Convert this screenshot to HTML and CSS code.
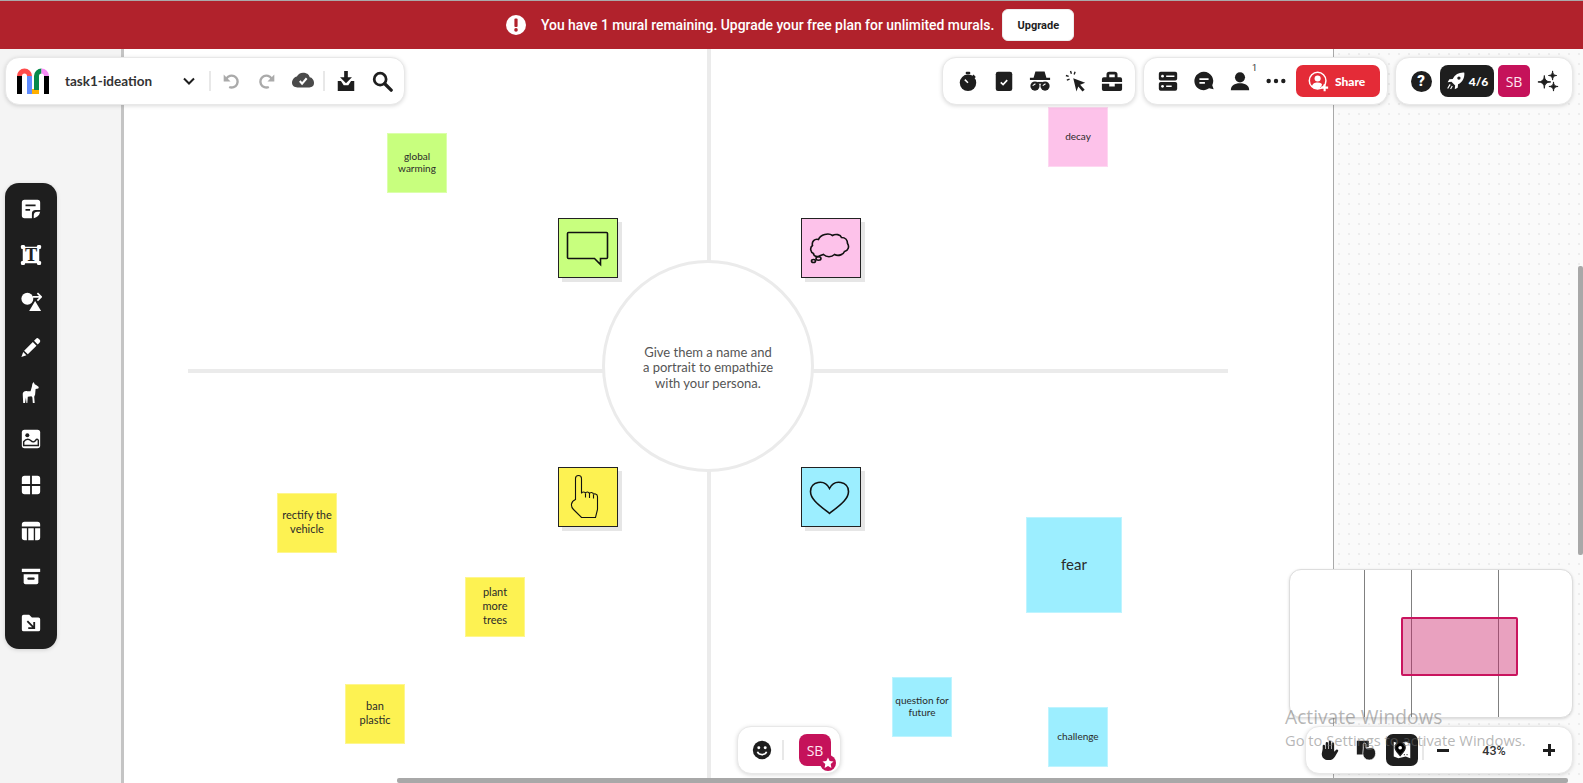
FILE: index.html
```html
<!DOCTYPE html>
<html lang="en">
<head>
    <meta charset="UTF-8">
    <meta name="viewport" content="width=device-width, initial-scale=1.0">
    <title>task1-ideation</title>
    <link rel="stylesheet" href="styles.css">
</head>
<body>
    <div class="banner">
        <svg class="banner-icon" viewBox="0 0 20 20"><circle cx="10" cy="10" r="10" fill="#fff"/><rect x="8.4" y="3.6" width="3.2" height="8.4" rx="1" fill="#b1222c"/><circle cx="10" cy="14.9" r="1.8" fill="#b1222c"/></svg>
        <span class="banner-text">You have 1 mural remaining. Upgrade your free plan for unlimited murals.</span>
        <button class="upgrade">Upgrade</button>
    </div>

    <div class="board">
        <div class="gutter"></div>
        <div class="sheet"></div>
        <div class="outside"></div>

        <!-- the empathy map itself -->
        <div class="line line-v"></div>
        <div class="line line-h"></div>
        <div class="hub"><p>Give them a name and<br>a portrait to empathize<br>with your persona.</p></div>

        <div class="tile tile-says green">
            <svg viewBox="1.500 1.500 57 57"><path d="M11 15h38a1 1 0 0 1 1 1v24a1 1 0 0 1-1 1h-6v6l-6-6H11a1 1 0 0 1-1-1V16a1 1 0 0 1 1-1z"/></svg>
        </div>
        <div class="tile tile-thinks pink">
            <svg viewBox="1.500 1.500 57 57"><path d="M20 38c-3 2-7 1-7-2-3-1-4-6-1-8-1-4 2-7 6-6 2-5 10-7 14-4 3-2 8-1 9 2 4 0 6 3 6 6 2 3 1 7-3 8-1 3-6 5-10 3-3 3-8 3-11 0z"/><ellipse cx="18" cy="41" rx="2.500" ry="1.700"/><ellipse cx="13" cy="43.500" rx="2" ry="1.500"/></svg>
        </div>
        <div class="tile tile-does yellow">
            <svg viewBox="1.500 1.500 57 57"><path class="thin" d="M18 33V12c0-4 6-4 6 0v15c0-2 4-2 4 0 0-2 4-2 4 .5 0-2 4-2 4 .5 0-1 4-1 4 2v13l-2 8H24l-8-8c-3-3-3-8 2-10z"/><path class="thin" d="M28 27v4M32 27.500v4M36 28v4"/></svg>
        </div>
        <div class="tile tile-feels blue">
            <svg viewBox="1.500 1.500 57 57"><path d="M29 47C19 39 10 33 10 25c0-10 14-13 19-3 5-10 19-7 19 3 0 8-9 14-19 22z"/></svg>
        </div>

        <div class="note note-global green">global warming</div>
        <div class="note note-decay pink">decay</div>
        <div class="note note-rectify yellow">rectify the vehicle</div>
        <div class="note note-plant yellow">plant<br>more<br>trees</div>
        <div class="note note-ban yellow">ban<br>plastic</div>
        <div class="note note-question blue">question for future</div>
        <div class="note note-challenge blue">challenge</div>
        <div class="note note-fear blue">fear</div>

        <!-- top toolbars -->
        <div class="bar bar-title">
            <svg class="logo" viewBox="0 0 32 26">
                <rect x="0" y="8" width="5" height="18"/>
                <path d="M2.500 8a5 5 0 0 1 10 0" fill="none" stroke="#ff4b4b" stroke-width="5"/>
                <rect x="10" y="8" width="5" height="18" fill="#5f8cff"/>
                <rect x="15" y="21" width="7" height="5" fill="#ffb000"/>
                <rect x="17" y="8" width="5" height="14" fill="#058a4b"/>
                <path d="M19.500 8a5 5 0 0 1 5-5" fill="none" stroke="#058a4b" stroke-width="5"/>
                <path d="M24.500 3a5 5 0 0 1 5 5" fill="none" stroke="#f78bf5" stroke-width="5"/>
                <rect x="27" y="8" width="5" height="18"/>
            </svg>
            <span class="mural-name">task1-ideation</span>
            <svg class="chevron" viewBox="0 0 20 20"><path d="M5 7.500l5 5 5-5" fill="none" stroke="#1e1e1e" stroke-width="2"/></svg>
            <i class="sep"></i>
            <span class="tool tool-first"><svg class="ico" viewBox="0 0 24 24"><path d="M7 9.500a6.500 6.500 0 1 1 3 9" fill="none" stroke="#aaa" stroke-width="2.600"/><path d="M4 5v7.500h7.500z" fill="#aaa"/></svg></span>
            <span class="tool"><svg class="ico" viewBox="0 0 24 24"><path d="M17 9.500a6.500 6.500 0 1 0-3 9" fill="none" stroke="#aaa" stroke-width="2.600"/><path d="M20 5v7.500h-7.500z" fill="#aaa"/></svg></span>
            <span class="tool"><svg class="ico" viewBox="0 0 24 24"><path fill="#4a4a4a" d="M19.350 8.040C18.670 4.590 15.640 3 12 3 9.110 3 6.600 4.640 5.350 7.040 2.340 7.360 0 10.910 0 14c0 3.310 2.690 5 6 5h13c2.760 0 5-1.240 5-5 0-2.640-2.050-5.780-4.650-5.960z"/><path d="M8.500 12l2.500 3 5-6" fill="none" stroke="#fff" stroke-width="2.200"/></svg></span>
            <i class="sep sep-b"></i>
            <span class="tool"><svg class="ico" viewBox="0 0 24 24"><path d="M10 1h4v7h4.500L12 14.500 5.500 8H10z"/><path d="M3 12h3.500l3 4.500h5l3-4.500H21v11H3z"/></svg></span>
            <span class="tool"><svg class="ico" viewBox="0 0 24 24"><circle cx="10" cy="10" r="6.500" fill="none" stroke="#1e1e1e" stroke-width="3"/><path d="M15 15l7 7" stroke="#1e1e1e" stroke-width="3.600" stroke-linecap="round"/></svg></span>
        </div>

        <div class="bar bar-collab">
            <span class="tool"><svg class="ico" viewBox="0 0 24 24"><circle cx="12" cy="14" r="9"/><rect x="9.500" y="2" width="5" height="2.500" rx="1"/><path d="M18 5l2.500 2.500-2 2-2.500-2.500z"/><path d="M8.500 10.500l3.500 3.500" stroke="#fff" stroke-width="1.600"/></svg></span>
            <span class="tool"><svg class="ico" viewBox="0 0 24 24"><rect x="3" y="2" width="18" height="21" rx="2.500"/><path d="M8.500 13.500l2.500 2.500 4.500-5" fill="none" stroke="#fff" stroke-width="1.800"/></svg></span>
            <span class="tool"><svg class="ico" viewBox="0 0 24 24"><path d="M7 1.500h10l2 7h4v2.500H1V8.500h4z"/><circle cx="6.500" cy="17.500" r="5"/><circle cx="17.500" cy="17.500" r="5"/><rect x="9" y="13" width="6" height="2"/><path d="M4 17l3-2M15 17l3-2" stroke="#fff" stroke-width="1.200"/></svg></span>
            <span class="tool"><svg class="ico" viewBox="0 0 24 24"><path d="M9 9l13 5-5.500 2 5 5.500-2.500 2-4.500-5.500-2 5.500z"/><path d="M6 1l1 3M1 6l3 1M11 2l-1 3M2 11l3-1" stroke="#1e1e1e" stroke-width="1.500"/></svg></span>
            <span class="tool"><svg class="ico" viewBox="0 0 24 24"><path fill-rule="evenodd" d="M6 8V5a3 3 0 0 1 3-3h6a3 3 0 0 1 3 3v3h3a2 2 0 0 1 2 2v3H1v-3a2 2 0 0 1 2-2zm3 0h6V5H9z"/><path d="M1 15h8v3h6v-3h8v6a2 2 0 0 1-2 2H3a2 2 0 0 1-2-2z"/></svg></span>
        </div>

        <div class="bar bar-share">
            <span class="tool"><svg class="ico" viewBox="0 0 24 24"><rect x="2" y="2" width="20" height="9.500" rx="2"/><rect x="2" y="13" width="20" height="9.500" rx="2"/><circle cx="6" cy="6.800" r="1.500" fill="#fff"/><circle cx="6" cy="17.800" r="1.500" fill="#fff"/><path d="M10 6.800h9M10 17.800h6" stroke="#fff" stroke-width="1.600"/></svg></span>
            <span class="tool"><svg class="ico" viewBox="0 0 24 24"><path d="M12 2a10 10 0 0 1 9 14.500l1.500 4.500-5-1A10 10 0 1 1 12 2z"/><path d="M7 10h10M7 14h6" stroke="#fff" stroke-width="2"/></svg></span>
            <span class="tool tool-count"><svg class="ico" viewBox="0 0 24 24"><circle cx="12" cy="8" r="5.500"/><path d="M2 22c0-5 4-7.500 10-7.500S22 17 22 22z"/></svg><sup class="count">1</sup></span>
            <span class="tool"><svg class="ico" viewBox="0 0 24 24"><circle cx="4" cy="12" r="2.400"/><circle cx="12" cy="12" r="2.400"/><circle cx="20" cy="12" r="2.400"/></svg></span>
            <button class="share">
                <svg class="share-icon" viewBox="0 0 24 24"><circle cx="11" cy="11" r="9.500" fill="none" stroke="#fff" stroke-width="1.700"/><circle cx="11" cy="8.500" r="3.500" fill="#fff"/><path d="M4.500 18c0-3.500 3-5 6.500-5s5 1 5 3l-3 4.500H7z" fill="#fff"/><path d="M19 15v8M15 19h8" stroke="#fff" stroke-width="2.400"/></svg>
                <span>Share</span>
            </button>
        </div>

        <div class="bar bar-account">
            <span class="tool"><span class="help">?</span></span>
            <span class="rocket">
                <svg viewBox="0 0 24 24"><path fill="#fff" d="M22 2c-6-.5-11 2-14 7.500L4 10l-2 3.500 4.500-.5 4.500 4.500-.5 4.500 3.500-2 .5-4c5.500-3 8-8 7.500-14z"/><circle cx="15.500" cy="8.500" r="2" fill="#1e1e1e"/><path d="M5 16l-3 5M7.500 18l-2 3.500" stroke="#fff" stroke-width="1.400"/></svg>
                <b>4/6</b>
            </span>
            <span class="avatar">SB</span>
            <span class="tool tool-spark"><svg class="ico" viewBox="0 0 24 24"><path d="M8 6Q8 13 15 13 8 13 8 20 8 13 1 13 8 13 8 6z" stroke="#1e1e1e"/><path d="M17 1Q17 6 21.500 6 17 6 17 11 17 6 12.500 6 17 6 17 1z" stroke="#1e1e1e"/><path d="M18 13Q18 18 23 18 18 18 18 23 18 18 13 18 18 18 18 13z" stroke="#1e1e1e"/></svg></span>
        </div>

        <!-- left tools -->
        <div class="bar palette">
            <span class="pal"><svg viewBox="0 0 24 24"><path fill="#fff" d="M5 2h14a3 3 0 0 1 3 3v8h-5a4 4 0 0 0-4 4v5H5a3 3 0 0 1-3-3V5a3 3 0 0 1 3-3z"/><path d="M6 8h11M6 13h5" stroke="#1e1e1e" stroke-width="2"/><path fill="#fff" d="M22 15c-1 4-3 6-7 7v-3a4 4 0 0 1 4-4z"/></svg></span>
            <span class="pal"><svg viewBox="0 0 24 24"><rect x="3" y="3" width="18" height="18" fill="#fff"/><rect x="1" y="1" width="4.500" height="4.500" rx="1.500" fill="#fff"/><rect x="18.500" y="1" width="4.500" height="4.500" rx="1.500" fill="#fff"/><rect x="1" y="18.500" width="4.500" height="4.500" rx="1.500" fill="#fff"/><rect x="18.500" y="18.500" width="4.500" height="4.500" rx="1.500" fill="#fff"/><text class="pal-t" x="12" y="18.500" text-anchor="middle">T</text></svg></span>
            <span class="pal"><svg viewBox="0 0 24 24"><circle cx="8" cy="9.500" r="6.500" fill="#fff"/><path fill="#fff" d="M16.500 12L23 23H10z"/><path d="M14 7.500h8M19 3.500l4 4-4 4" fill="none" stroke="#fff" stroke-width="1.800"/></svg></span>
            <span class="pal"><svg viewBox="0 0 24 24"><path fill="#fff" d="M17.500 3a2 2 0 0 1 2.800 0l1.200 1.200a2 2 0 0 1 0 2.800l-2.200 2.200-4-4zM14 6.500l4 4L8.500 20l-4-4zM3.500 17.500l3.500 3.500L1.500 23z"/></svg></span>
            <span class="pal"><svg viewBox="0 0 24 24"><path fill="#fff" d="M15 0l1 2.500 2 1 2.500 2-.5 1.500-3 .5-.5 6-1 2.500.5 7h-2l-.5-6-1-1.500-4 .5-.5 7H7l-.5-6-1 6H3.500L3 14c-.5-3 2-4.500 5-4h3.500L13 5l.5-3z"/></svg></span>
            <span class="pal"><svg viewBox="0 0 24 24"><rect x="2" y="2" width="20" height="20" rx="3" fill="#fff"/><circle cx="8" cy="8" r="2.200" fill="#1e1e1e"/><path d="M4 19v-4c3-4 6-3 8-1s4 1 5-.5 2.500-1.500 3 0v5.500z" fill="none" stroke="#1e1e1e" stroke-width="1.600"/></svg></span>
            <span class="pal"><svg viewBox="0 0 24 24"><path fill="#fff" d="M5 2h6v9H2V5a3 3 0 0 1 3-3zM13 2h6a3 3 0 0 1 3 3v6h-9zM2 13h9v9H5a3 3 0 0 1-3-3zM13 13h9v6a3 3 0 0 1-3 3h-6z"/></svg></span>
            <span class="pal"><svg viewBox="0 0 24 24"><path fill="#fff" d="M5 2h14a3 3 0 0 1 3 3v2H2V5a3 3 0 0 1 3-3zM2 9h5.500v13H5a3 3 0 0 1-3-3zM9 9h6v13H9zM16.500 9H22v10a3 3 0 0 1-3 3h-2.500z"/></svg></span>
            <span class="pal"><svg viewBox="0 0 24 24"><rect x="2" y="3" width="20" height="3.500" fill="#fff"/><path fill="#fff" d="M4 9h16v9a2 2 0 0 1-2 2H6a2 2 0 0 1-2-2z"/><rect x="8" y="12.500" width="8" height="2.500" rx="1" fill="#1e1e1e"/></svg></span>
            <span class="pal"><svg viewBox="0 0 24 24"><path fill="#fff" d="M4 3h6l3 3h7a2 2 0 0 1 2 2v11a2 2 0 0 1-2 2H4a2 2 0 0 1-2-2V5a2 2 0 0 1 2-2z"/><path d="M8 10l7 7M15.500 11v6.500H9" fill="none" stroke="#1e1e1e" stroke-width="2"/></svg></span>
        </div>

        <!-- bottom right -->
        <div class="minimap">
            <i class="mm-line mm-a"></i>
            <i class="mm-line mm-b"></i>
            <i class="mm-line mm-c"></i>
            <div class="mm-view"></div>
        </div>

        <div class="bar bar-zoom">
            <span class="tool"><svg class="ico" viewBox="0 0 24 24"><path d="M4 11V7.500a1.300 1.300 0 0 1 2.600 0V11h.7V4.500a1.300 1.300 0 0 1 2.600 0V11h.7V3.300a1.300 1.300 0 0 1 2.600 0V11h.7V5a1.300 1.300 0 0 1 2.600 0v9l2-2c1.500-1.500 3.500.5 2 2l-3 5c-1.500 2.500-3.500 4-7 4-5 0-7.500-3-7.500-7z"/></svg></span>
            <span class="tool"><svg class="ico" viewBox="0 0 24 24"><path d="M2 2h13v7H9v8H2z"/><path d="M9 10V6a1.500 1.500 0 0 1 3 0v4l6-.5c3 0 4.500 2.500 4.500 6.500a7 7 0 0 1-14 0z" stroke="#fff" stroke-width=".8"/></svg></span>
            <span class="map-btn"><svg viewBox="0 0 24 24"><path fill="#fff" d="M3 3l5 2 8-2 5 2v16l-5-2-8 2-5-2z"/><path d="M10 4c-3.500 0-5.500 2.500-5.500 5.500S7.500 15 10 18c2.500-3 5.500-5.500 5.500-8.500S13.500 4 10 4z" stroke="#1e1e1e" stroke-width="1.400"/><circle cx="10" cy="9.500" r="2" fill="#fff"/><path d="M14 17h1M17 17h1" stroke="#1e1e1e" stroke-width="1.500"/></svg></span>
            <i class="sep sep-z"></i>
            <span class="zoom-btn zoom-minus"></span>
            <span class="zoom-val">43%</span>
            <span class="zoom-btn zoom-plus"></span>
        </div>

        <div class="bar bar-react">
            <span class="tool"><svg class="ico" viewBox="0 0 24 24"><circle cx="12" cy="12" r="10"/><circle cx="8.500" cy="9.500" r="1.600" fill="#fff"/><circle cx="15.500" cy="9.500" r="1.600" fill="#fff"/><path d="M7 14c1.500 4 8.500 4 10 0" fill="none" stroke="#fff" stroke-width="1.800"/></svg></span>
            <i class="sep sep-r"></i>
            <span class="avatar avatar-big">SB
                <svg class="star" viewBox="0 0 16 16"><circle cx="8" cy="8" r="8" fill="#c5125a"/><path fill="#fff" d="M8 2.500l1.700 3.500 3.800.5-2.800 2.600.7 3.800L8 11l-3.400 1.900.7-3.800-2.800-2.600 3.800-.5z"/></svg>
            </span>
        </div>

        <div class="scroll scroll-x"></div>
        <div class="scroll scroll-y"></div>

        <div class="watermark">
            <div class="wm-big">Activate Windows</div>
            <div class="wm-small">Go to Settings to activate Windows.</div>
        </div>
    </div>
</body>
</html>
```

FILE: styles.css
```css
* {
    box-sizing: border-box;
}
html, body {
    height: 100%;
}
body {
    margin: 0;
    display: flex;
    flex-direction: column;
    overflow: hidden;
    font-family: Lato, Arial, sans-serif;
    color: #1e1e1e;
}
svg {
    display: block;
}

/* banner */
.banner {
    height: 49px;
    flex: none;
    display: flex;
    align-items: center;
    padding-left: 506px;
    background-color: #b1222c;
    border-top: 1px solid #aaa;
}
.banner-icon {
    width: 20px;
    height: 20px;
}
.banner-text {
    margin-left: 15px;
    color: #fff;
    font-family: Roboto, sans-serif;
    font-weight: 500;
    font-size: 13.9px;
    white-space: nowrap;
}
.upgrade {
    margin-left: 8px;
    width: 72px;
    height: 32px;
    border: 1px solid #eee;
    border-radius: 6px;
    background-color: #fff;
    color: #1e1e1e;
    font-family: Roboto, sans-serif;
    font-weight: 700;
    font-size: 11px;
}

/* board */
.board {
    position: relative;
    flex: 1;
    display: flex;
    overflow: hidden;
}
.gutter {
    width: 121px;
    background-color: #f4f4f4;
}
.sheet {
    width: 213px;
    flex: 1;
    background-color: #fff;
    border-left: 3px solid #c4c4c4;
    border-right: 1px solid #a9a9a9;
}
.outside {
    width: 249px;
    background-color: #fafafa;
    background-image: radial-gradient(#ececec 0.7px, transparent 0.9px);
    background-size: 10px 10px;
}

.line {
    position: absolute;
    background-color: #ebebeb;
}
.line-v {
    left: 707px;
    top: 0;
    width: 4px;
    bottom: 0;
}
.line-h {
    left: 188px;
    top: 320px;
    width: 1040px;
    height: 4px;
}
.hub {
    position: absolute;
    left: 602px;
    top: 211px;
    width: 212px;
    height: 212px;
    display: flex;
    align-items: center;
    justify-content: center;
    padding-top: 4px;
    background-color: #fff;
    border: 3px solid #ebebeb;
    border-radius: 50%;
}
.hub p {
    margin: 0;
    color: #555;
    font-size: 13px;
    line-height: 15.5px;
    text-align: center;
}

.green { background-color: #c8ff7e; }
.pink { background-color: #fdc2ea; }
.yellow { background-color: #fdf252; }
.blue { background-color: #9ceeff; }

.tile {
    position: absolute;
    width: 60px;
    height: 60px;
    border: 1.5px solid #222;
    box-shadow: 4px 4px 0 #e6e6e6;
}
.tile svg {
    width: 57px;
    height: 57px;
    fill: none;
    stroke: #111;
    stroke-width: 1.6;
}
.tile svg .thin {
    stroke-width: 1.1;
}
.tile-says { left: 558px; top: 169px; }
.tile-thinks { left: 801px; top: 169px; }
.tile-does { left: 558px; top: 418px; }
.tile-feels { left: 801px; top: 418px; }

.note {
    position: absolute;
    width: 60px;
    height: 60px;
    display: flex;
    align-items: center;
    justify-content: center;
    padding: 0 2px 2px;
    box-shadow: inset 0 0 0 1px rgba(255, 255, 255, 0.35);
    color: #2a2a2a;
    font-size: 10px;
    line-height: 12px;
    text-align: center;
}
.note-global { left: 387px; top: 84px; }
.note-decay { left: 1048px; top: 58px; }
.note-rectify { left: 277px; top: 444px; font-size: 11px; line-height: 14px; }
.note-plant { left: 465px; top: 528px; font-size: 11px; line-height: 14px; }
.note-ban { left: 345px; top: 635px; font-size: 11px; line-height: 14px; }
.note-question { left: 892px; top: 628px; }
.note-challenge { left: 1048px; top: 658px; }
.note-fear {
    left: 1026px;
    top: 468px;
    width: 96px;
    height: 96px;
    font-size: 15px;
}

/* floating bars */
.bar {
    position: absolute;
    display: flex;
    align-items: center;
    height: 48px;
    background-color: #fff;
    border: 1px solid #e8e8e8;
    border-radius: 14px;
    box-shadow: 0 1px 4px rgba(0, 0, 0, 0.15);
}
.tool {
    width: 36px;
    height: 32px;
    flex: none;
    display: flex;
    align-items: center;
    justify-content: center;
}
.ico {
    width: 22px;
    height: 22px;
    fill: #1e1e1e;
}
.sep {
    width: 2px;
    height: 20px;
    flex: none;
    margin-left: 10px;
    background-color: #e8e8e8;
}
.sep-b {
    margin-left: 2px;
    margin-right: 3px;
}
.bar-title {
    left: 5px;
    top: 8px;
    width: 400px;
    padding-left: 11px;
}
.logo {
    width: 32px;
    height: 26px;
    flex: none;
}
.mural-name {
    width: 114px;
    margin-left: 16px;
    font-size: 13.5px;
    font-weight: 700;
    color: #333;
}
.chevron {
    width: 20px;
    height: 20px;
    flex: none;
}
.tool-first {
    margin-left: 2px;
}
.bar-collab {
    left: 942px;
    top: 8px;
    width: 194px;
    padding-left: 7px;
}
.bar-share {
    left: 1143px;
    top: 8px;
    width: 245px;
    padding-left: 6px;
}
.tool-count {
    position: relative;
}
.count {
    position: absolute;
    right: 1px;
    top: -2px;
    font-family: Roboto, sans-serif;
    font-size: 9px;
    line-height: 10px;
    color: #333;
}
.share {
    width: 84px;
    height: 32px;
    margin-left: 2px;
    display: flex;
    align-items: center;
    padding: 0 0 0 12px;
    border: none;
    border-radius: 7px;
    background-color: #e42b37;
    color: #fff;
    font-family: Lato, sans-serif;
    font-weight: 900;
    font-size: 12px;
}
.share-icon {
    width: 21px;
    height: 21px;
    margin-right: 6px;
}
.bar-account {
    left: 1395px;
    top: 8px;
    width: 178px;
    padding-left: 7px;
}
.help {
    width: 21px;
    height: 21px;
    display: flex;
    align-items: center;
    justify-content: center;
    border-radius: 50%;
    background-color: #1e1e1e;
    color: #fff;
    font-family: Roboto, sans-serif;
    font-weight: 900;
    font-size: 15px;
}
.rocket {
    width: 54px;
    height: 32px;
    margin-left: 1px;
    display: flex;
    align-items: center;
    justify-content: center;
    gap: 3px;
    border-radius: 8px;
    background-color: #1e1e1e;
    color: #fff;
    font-family: Lato, sans-serif;
    font-size: 12px;
}
.rocket b {
    font-weight: 900;
}
.rocket svg {
    width: 20px;
    height: 20px;
}
.avatar {
    position: relative;
    width: 32px;
    height: 32px;
    margin-left: 4px;
    display: flex;
    align-items: center;
    justify-content: center;
    border-radius: 5px;
    background-color: #c5125a;
    color: #ffe6f0;
    font-family: "Open Sans", sans-serif;
    font-size: 14px;
}
.tool-spark {
    width: 36px;
}

.palette {
    left: 5px;
    top: 134px;
    width: 52px;
    height: 466px;
    flex-direction: column;
    padding: 3px 0;
    background-color: #1e1e1e;
    border: none;
}
.pal {
    width: 52px;
    height: 46px;
    flex: none;
    display: flex;
    align-items: center;
    justify-content: center;
}
.pal svg {
    width: 22px;
    height: 22px;
}
.pal-t {
    font-family: "Liberation Serif", serif;
    font-weight: 700;
    font-size: 20px;
    fill: #1e1e1e;
}

.minimap {
    position: absolute;
    left: 1289px;
    top: 520px;
    width: 284px;
    height: 149px;
    overflow: hidden;
    background-color: #fff;
    border: 1px solid #ddd;
    border-radius: 12px;
    box-shadow: 0 1px 3px rgba(0, 0, 0, 0.15);
}
.mm-line {
    position: absolute;
    top: 0;
    bottom: 0;
    width: 1px;
    background-color: #808080;
}
.mm-a { left: 74px; }
.mm-b { left: 121px; }
.mm-c { left: 208px; }
.mm-view {
    position: absolute;
    left: 111px;
    top: 47px;
    width: 117px;
    height: 59px;
    background-color: rgba(201, 20, 94, 0.4);
    border: 2px solid #c9145e;
    border-radius: 2px;
}

.bar-zoom {
    left: 1305px;
    top: 677px;
    width: 268px;
    padding-left: 6px;
}
.map-btn {
    width: 32px;
    height: 32px;
    flex: none;
    margin-left: 2px;
    display: flex;
    align-items: center;
    justify-content: center;
    border-radius: 7px;
    background-color: #1e1e1e;
}
.map-btn svg {
    width: 22px;
    height: 22px;
}
.sep-z {
    margin-left: 4px;
}
.zoom-btn {
    position: relative;
    width: 12px;
    height: 12px;
    flex: none;
}
.zoom-btn::before {
    content: "";
    position: absolute;
    left: 0;
    top: 4.5px;
    width: 12px;
    height: 3px;
    background-color: #1e1e1e;
}
.zoom-plus::after {
    content: "";
    position: absolute;
    left: 4.5px;
    top: 0;
    width: 3px;
    height: 12px;
    background-color: #1e1e1e;
}
.zoom-minus {
    margin-left: 13px;
}
.zoom-val {
    width: 90px;
    text-align: center;
    font-family: Roboto, sans-serif;
    font-weight: 500;
    font-size: 12.5px;
    color: #333;
}
.zoom-plus {
    margin-left: 4px;
}

.bar-react {
    left: 737px;
    top: 677px;
    width: 104px;
    padding-left: 6px;
}
.sep-r {
    margin-left: 2px;
}
.avatar-big {
    margin-left: 15px;
    border-radius: 8px;
}
.star {
    position: absolute;
    right: -5px;
    bottom: -5px;
    width: 16px;
    height: 16px;
}

.scroll {
    position: absolute;
    background-color: #a8a8a8;
    border-radius: 2px;
}
.scroll-x {
    left: 397px;
    width: 1171px;
    bottom: 0;
    height: 5px;
}
.scroll-y {
    left: 1578px;
    top: 217px;
    width: 5px;
    height: 289px;
}

.watermark {
    position: absolute;
    left: 1285px;
    top: 655px;
    font-family: "Open Sans", sans-serif;
    color: rgba(110, 110, 110, 0.5);
    white-space: nowrap;
}
.wm-big {
    font-size: 19.2px;
    line-height: 26px;
}
.wm-small {
    font-size: 14.7px;
    line-height: 20px;
}
```
